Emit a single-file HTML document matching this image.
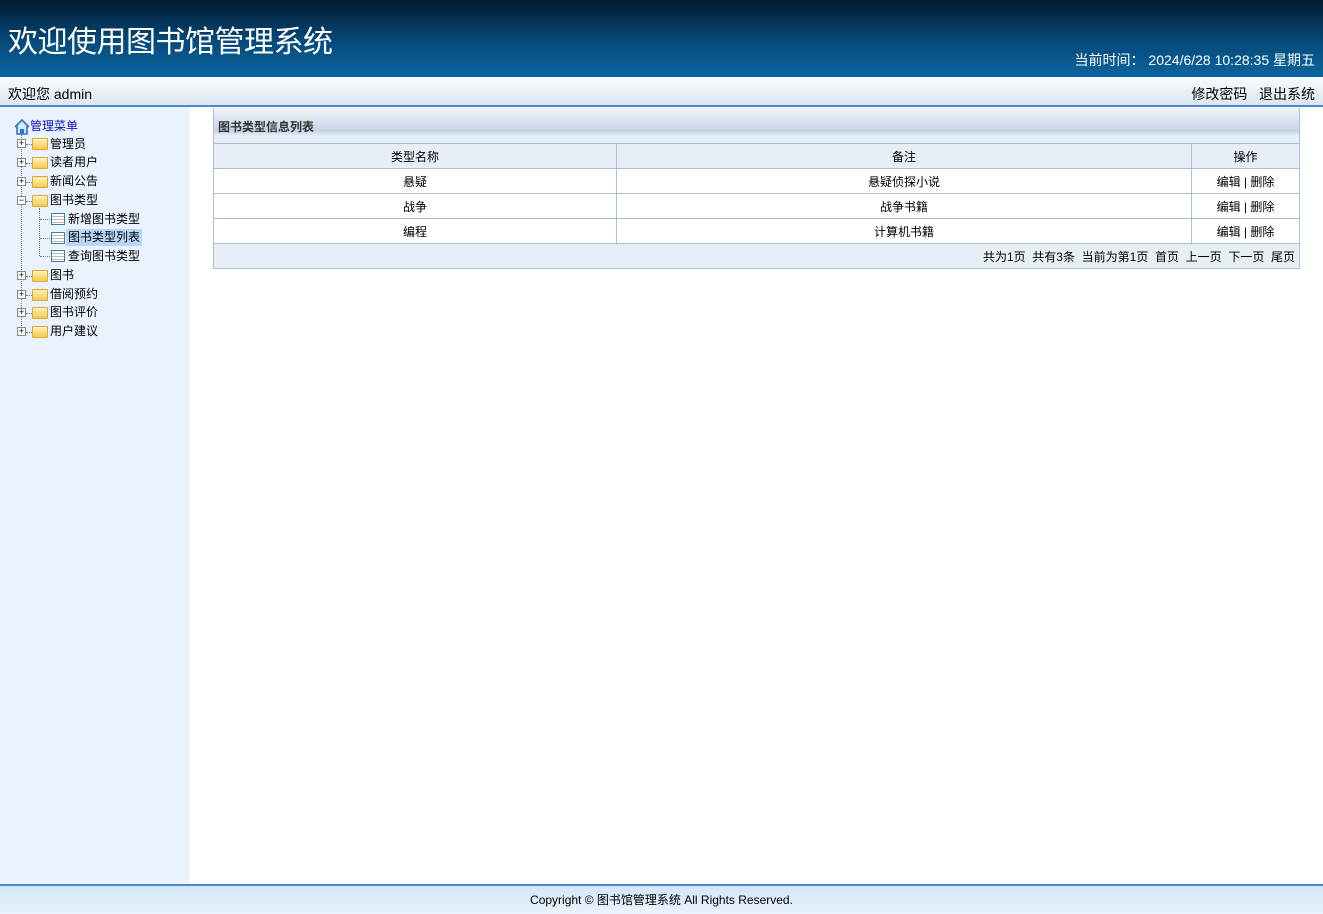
<!DOCTYPE html>
<html><head><meta charset="utf-8"><style>
*{margin:0;padding:0;box-sizing:border-box}
body{width:1323px;height:914px;overflow:hidden;font-family:"Liberation Sans","Noto Sans CJK SC",sans-serif;font-size:12px;color:#000;background:#fff;position:relative}
#hd{position:absolute;left:0;top:0;width:1323px;height:77px;background:linear-gradient(#021a30,#064a7c 55%,#0b659f);}
#hd h1{position:absolute;left:8px;top:17px;font-size:30px;font-weight:normal;color:#fff;letter-spacing:-0.5px}
#hd .t{position:absolute;right:8px;top:50px;color:#fff;font-size:14px}
#bar{position:absolute;left:0;top:77px;width:1323px;height:30px;background:linear-gradient(#f8fbfe,#dde7f0);border-bottom:2px solid #4a8acc;font-size:14px}
#bar .l{position:absolute;left:8px;top:7px}
#bar .r{position:absolute;right:8px;top:7px}
#sb{position:absolute;left:0;top:107px;width:190px;height:777px;background:#eaf3fd}
.n{position:absolute;height:17px;line-height:17px;font-size:12px;white-space:nowrap}
.pm{position:absolute;width:9px;height:9px;border:1px solid #888;background:#fff;font-size:9px;line-height:7px;text-align:center;color:#000}
.fd{position:absolute;width:16px;height:12px;background:linear-gradient(#fff3c0,#f5c94c);border:1px solid #d9a830;border-radius:1px}
.pg{position:absolute;width:14px;height:12px;border:1px solid #3a7fb0;background:repeating-linear-gradient(#fff 0 2px,#bbb 2px 3px);}
.dv{position:absolute;border-left:1px dotted #777}
.dh{position:absolute;border-top:1px dotted #777;width:8px}
#tb{position:absolute;left:213px;top:108px;width:1087px;border:1px solid #a9bfd6;border-top:none}
#tb .cap{height:35px;background:linear-gradient(#eef3f8,#e5ecf4 20%,#c5d5e6 65%,#e6eef6 80%);font-weight:bold;color:#333;padding:10px 0 0 4px}
table{border-collapse:collapse;width:calc(100% + 2px);margin:0 -1px -1px -1px}
td{height:25px;border:1px solid #a9bfd6;text-align:center;font-size:12px}
tr.h td{background:#e8eef5}
#ft{position:absolute;left:0;top:884px;width:1323px;height:30px;border-top:2px solid #4a8acc;background:linear-gradient(#d2e5f8,#eaf3fd);text-align:center;padding-top:5px}
</style></head><body>
<div id="hd"><h1>欢迎使用图书馆管理系统</h1><div class="t">当前时间：&nbsp;2024/6/28 10:28:35 星期五</div></div>
<div id="bar"><span class="l">欢迎您 admin</span><span class="r">修改密码&nbsp;&nbsp; 退出系统</span></div>
<div id="sb">
<svg style="position:absolute;left:14px;top:12px" width="16" height="16" viewBox="0 0 16 16"><path d="M1 8 L8 1 L15 8 M3 7 V15 H13 V7" fill="#cfe6fb" stroke="#2a76c8" stroke-width="1.6"/><rect x="6" y="10" width="4" height="5" fill="#2a76c8"/></svg>
<div class="n" style="left:30px;top:11px;color:#1010c0">管理菜单</div>
<div class="dv" style="left:21px;top:28px;height:197px"></div>
<div class="dv" style="left:39px;top:101px;height:48px"></div>
</div>
<div style="position:absolute;left:0;top:107px">
<div class="pm" style="left:17px;top:32px">+</div><div class="dh" style="left:26px;top:37px"></div><div class="fd" style="left:32px;top:31px"></div><div class="n" style="left:50px;top:29px">管理员</div>
<div class="pm" style="left:17px;top:51px">+</div><div class="dh" style="left:26px;top:56px"></div><div class="fd" style="left:32px;top:50px"></div><div class="n" style="left:50px;top:47px">读者用户</div>
<div class="pm" style="left:17px;top:70px">+</div><div class="dh" style="left:26px;top:75px"></div><div class="fd" style="left:32px;top:69px"></div><div class="n" style="left:50px;top:66px">新闻公告</div>
<div class="pm" style="left:17px;top:89px">−</div><div class="dh" style="left:26px;top:94px"></div><div class="fd" style="left:32px;top:88px"></div><div class="n" style="left:50px;top:85px">图书类型</div>
<div class="dh" style="left:40px;top:112px;width:10px"></div><div class="pg" style="left:51px;top:106px"></div><div class="n" style="left:68px;top:104px">新增图书类型</div>
<div class="dh" style="left:40px;top:131px;width:10px"></div><div class="pg" style="left:51px;top:125px"></div><div class="n" style="left:66px;top:122px;background:#b8d6f5;padding:0 2px">图书类型列表</div>
<div class="dh" style="left:40px;top:149px;width:10px"></div><div class="pg" style="left:51px;top:143px"></div><div class="n" style="left:68px;top:141px">查询图书类型</div>
<div class="pm" style="left:17px;top:164px">+</div><div class="dh" style="left:26px;top:169px"></div><div class="fd" style="left:32px;top:163px"></div><div class="n" style="left:50px;top:160px">图书</div>
<div class="pm" style="left:17px;top:183px">+</div><div class="dh" style="left:26px;top:188px"></div><div class="fd" style="left:32px;top:182px"></div><div class="n" style="left:50px;top:179px">借阅预约</div>
<div class="pm" style="left:17px;top:201px">+</div><div class="dh" style="left:26px;top:206px"></div><div class="fd" style="left:32px;top:200px"></div><div class="n" style="left:50px;top:197px">图书评价</div>
<div class="pm" style="left:17px;top:220px">+</div><div class="dh" style="left:26px;top:225px"></div><div class="fd" style="left:32px;top:219px"></div><div class="n" style="left:50px;top:216px">用户建议</div>
</div>
<div id="tb"><div class="cap">图书类型信息列表</div>
<table>
<tr class="h"><td style="width:403px">类型名称</td><td style="width:575px">备注</td><td>操作</td></tr>
<tr><td>悬疑</td><td>悬疑侦探小说</td><td>编辑 | 删除</td></tr>
<tr><td>战争</td><td>战争书籍</td><td>编辑 | 删除</td></tr>
<tr><td>编程</td><td>计算机书籍</td><td>编辑 | 删除</td></tr>
<tr class="h"><td colspan="3" style="text-align:right;padding-right:4px">共为1页&nbsp; 共有3条&nbsp; 当前为第1页&nbsp; 首页&nbsp; 上一页&nbsp; 下一页&nbsp; 尾页</td></tr>
</table></div>
<div id="ft">Copyright © 图书馆管理系统 All Rights Reserved.</div>
</body></html>
